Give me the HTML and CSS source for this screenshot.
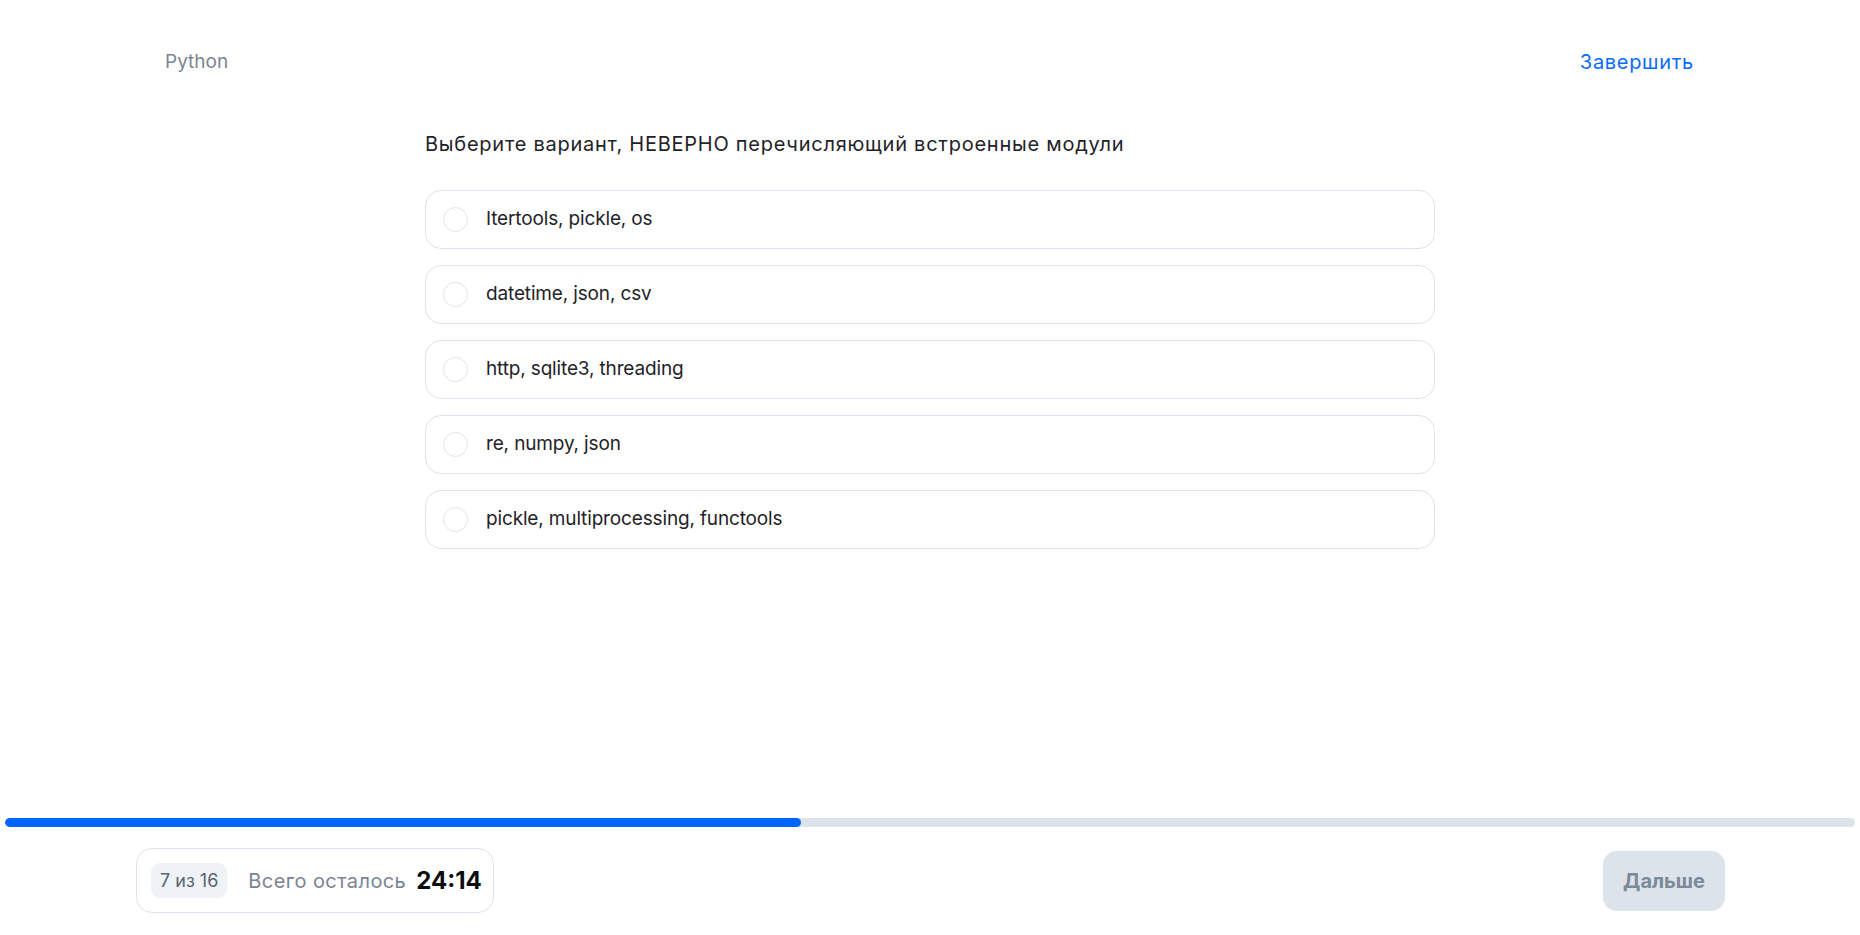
FILE: index.html
```html
<!DOCTYPE html>
<html lang="ru">
<head>
<meta charset="utf-8">
<title>Python — тест</title>
<link rel="stylesheet" href="styles.css">
</head>
<body>
<div class="page">
  <header class="header">
    <span class="subject">Python</span>
    <a class="finish" href="#">Завершить</a>
  </header>
  <main class="content">
    <h1 class="question">Выберите вариант, НЕВЕРНО перечисляющий встроенные модули</h1>
    <ul class="options">
      <li class="option"><span class="radio"></span><span class="label">Itertools, pickle, os</span></li>
      <li class="option"><span class="radio"></span><span class="label">datetime, json, csv</span></li>
      <li class="option"><span class="radio"></span><span class="label">http, sqlite3, threading</span></li>
      <li class="option"><span class="radio"></span><span class="label">re, numpy, json</span></li>
      <li class="option"><span class="radio"></span><span class="label">pickle, multiprocessing, functools</span></li>
    </ul>
  </main>
  <div class="bottom">
    <div class="progress"><div class="progress-fill" style="width: 43%"></div></div>
    <footer class="footer">
      <div class="status">
        <span class="counter">7 из 16</span>
        <span class="remaining">Всего осталось</span>
        <span class="timer">24:14</span>
      </div>
      <button class="next" type="button">Дальше</button>
    </footer>
  </div>
</div>
</body>
</html>
```

FILE: styles.css
```css
* { box-sizing: border-box; }
html, body { margin: 0; padding: 0; background: #fff; }
body {
  font-family: Inter, "Noto Sans", "Liberation Sans", sans-serif;
  color: #1f2329;
}
.page {
  height: 100vh;
  display: flex;
  flex-direction: column;
}
.header {
  display: flex;
  justify-content: space-between;
  align-items: center;
  padding: 48px 166px 0 165px;
  height: 76px;
}
.subject {
  font-size: 19px;
  color: #7a8593;
  line-height: 28px;
}
.finish {
  font-size: 20px;
  letter-spacing: 0.7px;
  color: #0a6cff;
  text-decoration: none;
  line-height: 28px;
}
.content {
  width: 1010px;
  margin: 0 auto;
}
.question {
  margin: 54px 0 0;
  font-size: 20px;
  font-weight: 400;
  letter-spacing: 0.75px;
  line-height: 28px;
  color: #1f2329;
}
.options {
  list-style: none;
  margin: 32px 0 0;
  padding: 0;
  display: flex;
  flex-direction: column;
  gap: 16px;
}
.option {
  height: 59px;
  border: 1px solid #dde3ec;
  border-radius: 16px;
  display: flex;
  align-items: center;
  padding-left: 17px;
  gap: 18px;
}
.radio {
  width: 25px;
  height: 25px;
  border: 1px solid #dfe4ec;
  border-radius: 50%;
  flex: none;
}
.label {
  font-size: 19px;
  letter-spacing: -0.15px;
  line-height: 26px;
  margin-top: -2px;
  color: #1f2329;
}
.bottom {
  margin-top: auto;
}
.progress {
  margin: 0 5px;
  height: 9px;
  background: #dce3ea;
  border-radius: 5px;
  overflow: hidden;
}
.progress-fill {
  height: 100%;
  background: #0066ff;
  border-radius: 5px;
}
.footer {
  display: flex;
  justify-content: space-between;
  align-items: center;
  padding: 21px 135px 22px 136px;
}
.status {
  height: 65px;
  width: 358px;
  border: 1px solid #dde3ec;
  border-radius: 16px;
  display: flex;
  align-items: center;
  padding-left: 14px;
}
.counter {
  background: #eff2f6;
  border-radius: 9px;
  height: 35px;
  padding: 0 9px;
  display: flex;
  align-items: center;
  font-size: 18px;
  color: #5a6472;
}
.remaining {
  margin-left: 21px;
  font-size: 20px;
  letter-spacing: 0.4px;
  color: #7a8593;
}
.timer {
  margin-left: 10px;
  font-size: 24px;
  font-weight: 700;
  color: #0c0d0f;
}
.next {
  width: 122px;
  height: 60px;
  border: none;
  border-radius: 14px;
  background: #dce3ea;
  color: #7b8a99;
  font-family: inherit;
  font-size: 20px;
  font-weight: 700;
}
```
